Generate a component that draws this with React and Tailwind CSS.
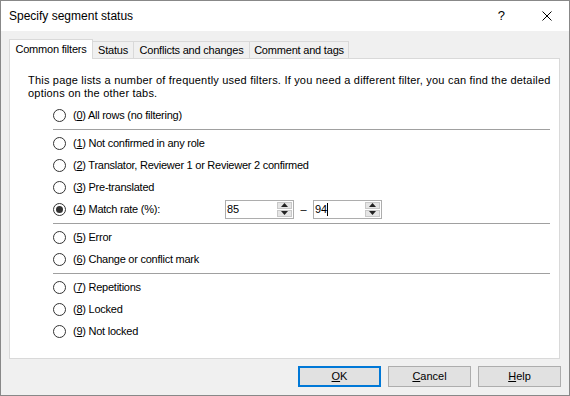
import React from "react";

const font = { fontFamily: '"Liberation Sans", Arial, sans-serif' };

const Radio = ({ checked }) => (
  <div className="w-[13px] h-[13px] rounded-full border border-[#333] bg-white flex items-center justify-center shrink-0">
    {checked && <div className="w-[7px] h-[7px] rounded-full bg-[#333]" />}
  </div>
);

const Row = ({ n, label, checked, children }) => (
  <div className="h-[22px] flex items-center">
    <Radio checked={checked} />
    <div className="ml-[7px] flex items-center">
      <span className="whitespace-nowrap tracking-[-0.25px]">
        (<span className="underline underline-offset-1">{n}</span>) {label}
      </span>
      {children}
    </div>
  </div>
);

const Sep = () => <div className="mt-[3px] mb-[2px] h-px bg-[#a0a0a0]" />;

const Arrow = ({ up }) => (
  <svg width="7" height="4" viewBox="0 0 7 4">
    <path d={up ? "M0 4 L3.5 0 L7 4 Z" : "M0 0 L3.5 4 L7 0 Z"} fill="#222" />
  </svg>
);

const Spin = ({ value, caret }) => (
  <div className="w-[69px] h-[19px] border border-[#adadad] bg-white flex items-stretch">
    <div className="flex-1 flex items-center pl-[1px] text-black">
      {value}
      {caret && <span className="inline-block w-px h-[13px] bg-black" />}
    </div>
    <div className="w-[15px] flex flex-col my-[1px] mr-[1px] gap-px">
      <div className="flex-1 bg-[#e5e5e5] border border-[#c8c8c8] flex items-center justify-center">
        <Arrow up />
      </div>
      <div className="flex-1 bg-[#e5e5e5] border border-[#c8c8c8] flex items-center justify-center">
        <Arrow />
      </div>
    </div>
  </div>
);

const Btn = ({ k, rest, primary }) => (
  <button
    className={
      "w-[83px] h-[21px] bg-[#e1e1e1] text-black flex items-center justify-center " +
      (primary ? "border-2 border-[#0078d7]" : "border border-[#adadad]")
    }
  >
    <span>
      <span className="underline underline-offset-1">{k}</span>
      {rest}
    </span>
  </button>
);

export default function App() {
  return (
    <div
      className="w-[570px] h-[396px] border border-[#888] bg-[#f0f0f0] flex flex-col text-[11px] text-black overflow-hidden"
      style={font}
    >
      {/* title bar */}
      <div className="h-[30px] bg-white flex items-center pl-[8px] pr-[17px]">
        <div className="flex-1 text-[12px]">Specify segment status</div>
        <div className="text-[13px] mr-[37px]">?</div>
        <svg width="10" height="10" viewBox="0 0 10 10">
          <path d="M0.5 0.5 L9.5 9.5 M9.5 0.5 L0.5 9.5" stroke="#000" strokeWidth="1" />
        </svg>
      </div>

      {/* tabs + page */}
      <div className="pl-[8px] pr-[9px] pt-[8px]">
        <div className="h-[19px] flex items-end tracking-[-0.2px]">
          <div className="relative z-10 w-[84px] h-[20px] -mb-px bg-white border border-b-0 border-[#d9d9d9] flex items-center justify-center">
            Common filters
          </div>
          <div className="w-[41px] h-[17px] border border-l-0 border-b-0 border-[#d9d9d9] flex items-center justify-center">Status</div>
          <div className="w-[116px] h-[17px] border border-l-0 border-b-0 border-[#d9d9d9] flex items-center justify-center">Conflicts and changes</div>
          <div className="w-[99px] h-[17px] border border-l-0 border-b-0 border-[#d9d9d9] flex items-center justify-center">Comment and tags</div>
        </div>
        <div className="h-[301px] bg-white border border-[#d9d9d9] pt-[15px]">
          <div className="pl-[18px] leading-[13px] whitespace-nowrap tracking-[0.2px]">
            This page lists a number of frequently used filters. If you need a different filter, you can find the detailed
            <br />
            options on the other tabs.
          </div>
          <div className="pl-[43px] pr-[9px] mt-[4px]">
            <Row n="0" label="All rows (no filtering)" />
            <Sep />
            <Row n="1" label="Not confirmed in any role" />
            <Row n="2" label="Translator, Reviewer 1 or Reviewer 2 confirmed" />
            <Row n="3" label="Pre-translated" />
            <div className="h-[22px] flex items-center">
              <Radio checked />
              <div className="ml-[7px] w-[152px] whitespace-nowrap tracking-[-0.25px]">
                (<span className="underline underline-offset-1">4</span>) Match rate (%):
              </div>
              <Spin value="85" />
              <div className="w-[19px] text-center">–</div>
              <Spin value="94" caret />
            </div>
            <Sep />
            <Row n="5" label="Error" />
            <Row n="6" label="Change or conflict mark" />
            <Sep />
            <Row n="7" label="Repetitions" />
            <Row n="8" label="Locked" />
            <Row n="9" label="Not locked" />
          </div>
        </div>
      </div>

      {/* buttons */}
      <div className="mt-[7px] pr-[8px] flex justify-end gap-[7px]">
        <Btn k="O" rest="K" primary />
        <Btn k="C" rest="ancel" />
        <Btn k="H" rest="elp" />
      </div>
    </div>
  );
}
